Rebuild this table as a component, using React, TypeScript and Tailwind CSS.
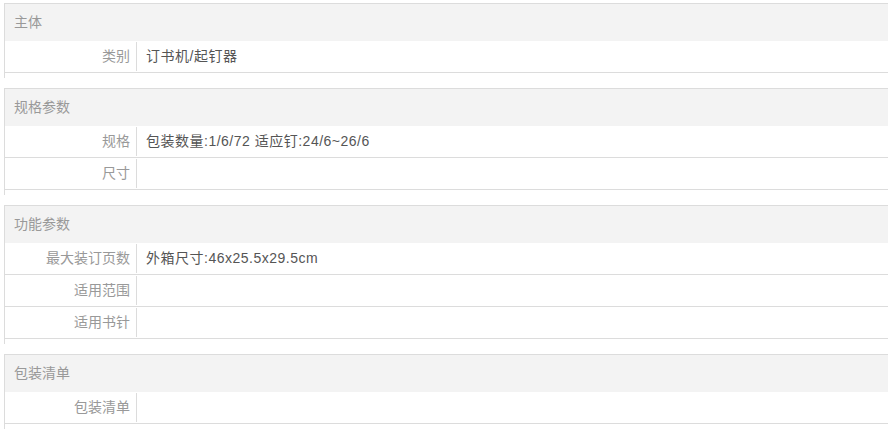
type Row = { label: string; value?: string };
type Group = { title: string; rows: Row[] };

const groups: Group[] = [
  { title: '主体', rows: [{ label: '类别', value: '订书机/起钉器' }] },
  {
    title: '规格参数',
    rows: [
      { label: '规格', value: '包装数量:1/6/72 适应钉:24/6~26/6' },
      { label: '尺寸' },
    ],
  },
  {
    title: '功能参数',
    rows: [
      { label: '最大装订页数', value: '外箱尺寸:46x25.5x29.5cm' },
      { label: '适用范围' },
      { label: '适用书针' },
    ],
  },
  { title: '包装清单', rows: [{ label: '包装清单' }] },
];

export default function App() {
  return (
    <div
      className="w-[894px] h-[430px] overflow-hidden bg-white pt-[3px] pl-[4px] text-[14px]"
      style={{ fontFamily: '"Liberation Sans", "Noto Sans CJK SC", sans-serif' }}
    >
      <div className="w-[884px]">
        {groups.map((g) => (
          <div key={g.title} className="mb-[10px] border-l border-t border-[#dcdcdc] pb-[5px]">
            <div className="flex h-[37px] items-center bg-[#f3f3f3] pl-[9px] text-[#999]">{g.title}</div>
            {g.rows.map((r) => (
              <div key={r.label} className="flex h-[32px] border-b border-[#dcdcdc]">
                <div className="flex w-[131px] items-center justify-end pr-[6px] text-[#999]">{r.label}</div>
                <div className="my-[1px] w-px bg-[#dcdcdc]" />
                <div className="flex flex-1 items-center pl-[9px] tracking-[0.5px] text-[#555]">{r.value}</div>
              </div>
            ))}
          </div>
        ))}
      </div>
    </div>
  );
}
